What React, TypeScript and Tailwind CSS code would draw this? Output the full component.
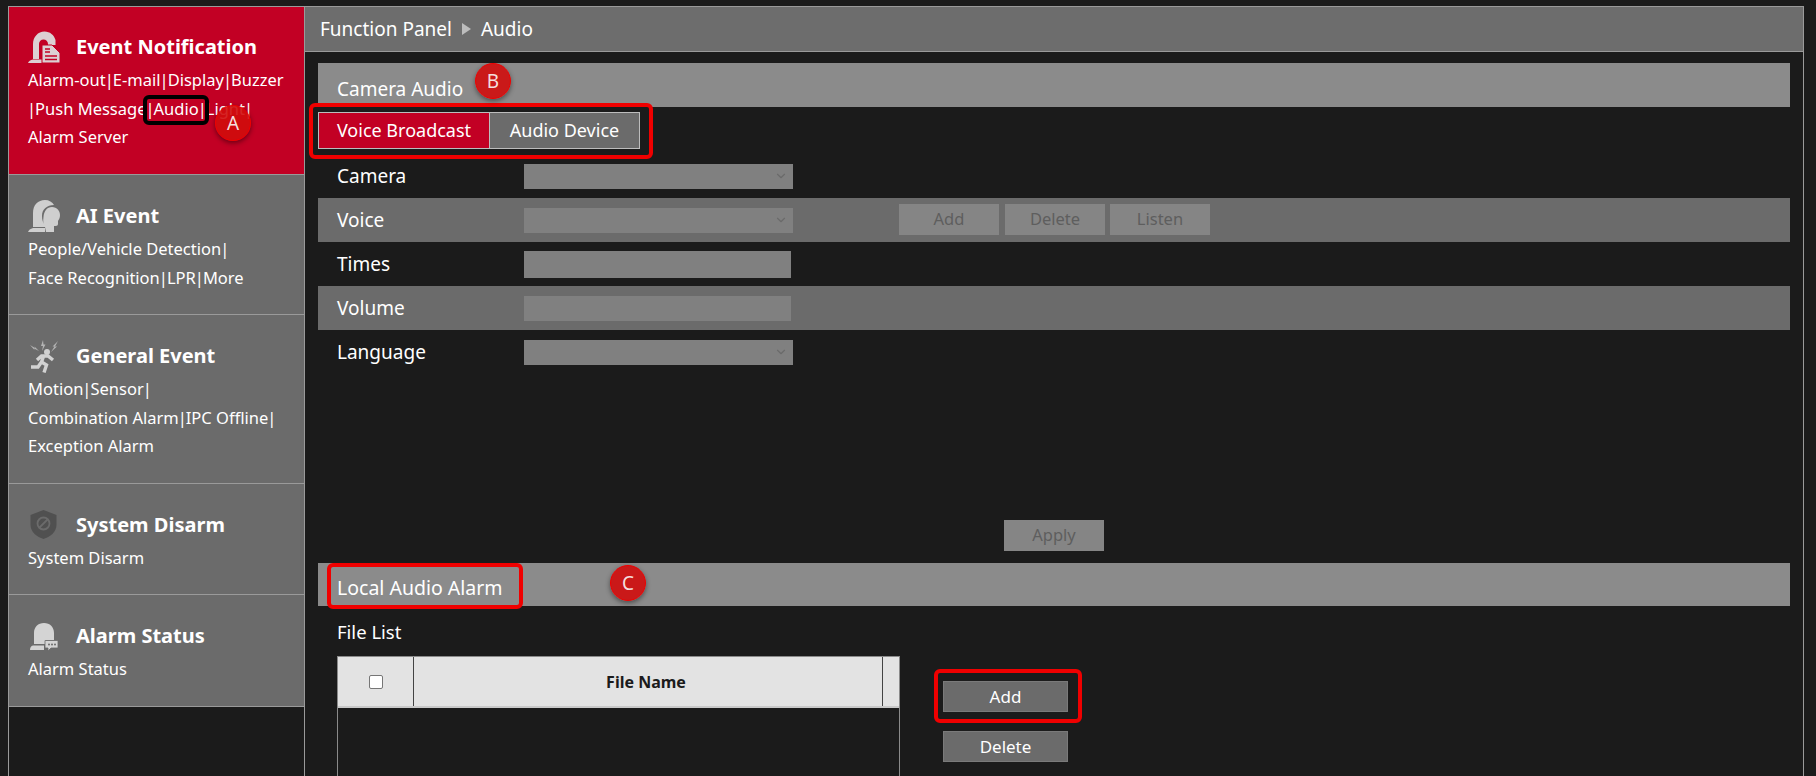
import { Fragment } from "react";
import { ChevronDown } from "lucide-react";

const font = "font-['Noto_Sans','Open_Sans',sans-serif]";

const DomeIcon = () => (
  <svg width="32" height="32" viewBox="0 0 32 32" className="shrink-0">
    <path d="M5 28V13C5 6 10 0.500 16.500 0.500C22 0.500 26 4 27.500 9V14H20V13A4.500 4.500 0 0 0 11 13V28Z" fill="#dcd0d3" />
    <path d="M5 28.500H15V32H0Q1 29 5 28.500Z" fill="#dcd0d3" />
    <path d="M14 14H24L32 22V32H14Z" fill="#dcd0d3" stroke="#c20024" strokeWidth="1" />
    <path d="M17 18H22M17 21H22M17 25H29M17 28.500H29" stroke="#c20024" strokeWidth="1.500" />
  </svg>
);

const FaceIcon = () => (
  <svg width="32" height="32" viewBox="0 0 32 32" className="shrink-0">
    <path d="M5 27V13C5 5 10 0 17 0C21 0 24.500 2 26 5C19 5 14 9 14 16C14 20 15 23 17 25V27Z" fill="#cfcfcf" />
    <path d="M5 28H17V32H0Q1 29 5 28Z" fill="#cfcfcf" />
    <path d="M24 7C29 7 32 11 32 15C32 18 31 19.500 30 21V24C30 26 28 26 26 26V32H18L17 27C15 24 15 21 15.500 17C16 11 19 7 24 7Z" fill="#cfcfcf" />
  </svg>
);

const RunIcon = () => (
  <svg width="32" height="33" viewBox="0 0 32 33" className="shrink-0">
    <circle cx="19" cy="12" r="3" fill="#d2d2d2" />
    <path d="M9 20L13.500 16H20L25 20M15.500 16.500L13.500 22L18.500 25L16 32.500M13.500 22L10 27H3" stroke="#d2d2d2" strokeWidth="3.400" fill="none" />
    <path d="M2 5L7 8L6.500 6.500L11 11L6 8.500L6.500 10Z" fill="#b4b4b4" />
    <path d="M15 0L13 6H15L14 11L17.500 4.500H15.500Z" fill="#b4b4b4" />
    <path d="M30 1L24.500 6.500H26.500L23 12L29 6.500H27Z" fill="#b4b4b4" />
  </svg>
);

const ShieldIcon = () => (
  <svg width="32" height="32" viewBox="0 0 32 32" className="shrink-0">
    <path d="M15.500 1L28.500 6V16C28.500 23 22 28 15.500 30C9 28 2.500 23 2.500 16V6Z" fill="#505050" />
    <circle cx="15.500" cy="14.500" r="6" fill="none" stroke="#6b6b6b" strokeWidth="1.800" />
    <path d="M11.500 18.500L19.500 10.500" stroke="#6b6b6b" strokeWidth="1.800" />
  </svg>
);

const StatusIcon = () => (
  <svg width="32" height="32" viewBox="0 0 32 32" className="shrink-0">
    <path d="M6 24V13C6 7 10 3 16 3C22 3 26 7 26 13V20H18V24Z" fill="#d4d4d4" />
    <path d="M5 25.500H16V30H2Q2 26 5 25.500Z" fill="#d4d4d4" />
    <path d="M17 20.500H30V28H23L20 31V28H17Z" fill="#d4d4d4" stroke="#6b6b6b" strokeWidth="0.800" />
    <circle cx="21" cy="24.500" r="1" fill="#6b6b6b" />
    <circle cx="24" cy="24.500" r="1" fill="#6b6b6b" />
    <circle cx="27" cy="24.500" r="1" fill="#6b6b6b" />
  </svg>
);

// the pipes sit tight against the words in the original
const PipedLine = ({ text }: { text: string }) => (
  <div>
    {text.split("|").map((part, i) => (
      <Fragment key={i}>
        {i > 0 && <span className="-mx-[1px]">|</span>}
        {part}
      </Fragment>
    ))}
  </div>
);

const MenuItem = ({
  title,
  icon,
  lines,
  active,
  height,
}: {
  title: string;
  icon: React.ReactNode;
  lines: string[];
  active?: boolean;
  height: string;
}) => (
  <div className={`${height} border-b border-[#9a9a9a] px-[19px] ${active ? "bg-[#c20024] pt-[24px]" : "bg-[#6b6b6b] pt-[25px]"}`}>
    <div className="flex h-[32px] items-center gap-[16px]">
      {icon}
      <span className="text-[20px] font-bold text-white">{title}</span>
    </div>
    <div className="mt-[3px] text-[16.500px] leading-[28.500px] whitespace-nowrap text-white">
      {lines.map((l) => (
        <PipedLine key={l} text={l} />
      ))}
    </div>
  </div>
);

const Field = ({ className }: { className: string }) => (
  <div className={`flex items-center justify-end pr-[5px] ${className}`}>
    <ChevronDown size={14} color="#6a6a6a" />
  </div>
);

const Row = ({
  label,
  shaded,
  children,
}: {
  label: string;
  shaded?: boolean;
  children: React.ReactNode;
}) => (
  <div className={`flex h-[44px] items-center pl-[19px] ${shaded ? "bg-[#6b6b6b]" : ""}`}>
    <div className="w-[187px] text-[19px] text-white">{label}</div>
    {children}
  </div>
);

const GhostButton = ({ text, className }: { text: string; className?: string }) => (
  <div className={`flex h-[31px] w-[100px] items-center justify-center bg-[#858585] text-[16.500px] text-[#5e5e5e] ${className ?? ""}`}>
    {text}
  </div>
);

const Badge = ({ text, className }: { text: string; className: string }) => (
  <div className={`absolute flex h-[36px] w-[36px] items-center justify-center rounded-full border border-[#ee0000] bg-[#d00c0c]/90 text-[19px] text-[#f4dede] shadow-[0_2px_5px_rgba(0,0,0,0.45)] ${className}`}>
    {text}
  </div>
);

export default function App() {
  return (
    <div className={`relative h-[776px] overflow-hidden bg-[#1b1b1b] pt-[6px] pl-[8px] ${font}`}>
      <div className="flex h-full">
        {/* left menu */}
        <div className="w-[297px] shrink-0 border-x border-t border-[#9a9a9a]">
          <MenuItem
            active
            height="h-[168px]"
            title="Event Notification"
            icon={<DomeIcon />}
            lines={["Alarm-out|E-mail|Display|Buzzer", "|Push Message|Audio|Light|", "Alarm Server"]}
          />
          <MenuItem
            height="h-[140px]"
            title="AI Event"
            icon={<FaceIcon />}
            lines={["People/Vehicle Detection|", "Face Recognition|LPR|More"]}
          />
          <MenuItem
            height="h-[169px]"
            title="General Event"
            icon={<RunIcon />}
            lines={["Motion|Sensor|", "Combination Alarm|IPC Offline|", "Exception Alarm"]}
          />
          <MenuItem height="h-[111px]" title="System Disarm" icon={<ShieldIcon />} lines={["System Disarm"]} />
          <MenuItem height="h-[112px]" title="Alarm Status" icon={<StatusIcon />} lines={["Alarm Status"]} />
        </div>

        {/* main panel */}
        <div className="w-[1499px] shrink-0 border-r border-[#9a9a9a]">
          <div className="flex h-[46px] items-center gap-[10px] border-y border-[#9a9a9a] bg-[#6d6d6d] pl-[15px] text-[19px] text-white">
            <span>Function Panel</span>
            <span className="h-0 w-0 border-y-[6px] border-l-[9px] border-y-transparent border-l-[#bdbdbd]" />
            <span>Audio</span>
          </div>

          <div className="mr-[13px] ml-[13px]">
            <div className="mt-[11px] flex h-[44px] items-center bg-[#8b8b8b] pt-[8px] pl-[19px] text-[19px] text-white">
              Camera Audio
            </div>

            <div className="mt-[5px] flex h-[37px] w-[322px] border border-[#bdbdbd] text-[18px] text-white">
              <div className="flex w-[170px] items-center justify-center bg-[#c20024]">Voice Broadcast</div>
              <div className="flex flex-1 items-center justify-center border-l border-[#bdbdbd] bg-[#6b6b6b]">Audio Device</div>
            </div>

            <div className="mt-[5px]">
              <Row label="Camera">
                <Field className="h-[25px] w-[269px] bg-[#808080]" />
              </Row>
              <Row label="Voice" shaded>
                <Field className="h-[25px] w-[269px] bg-[#808080]" />
                <GhostButton text="Add" className="mb-[1px] ml-[106px]" />
                <GhostButton text="Delete" className="mb-[1px] ml-[6px]" />
                <GhostButton text="Listen" className="mb-[1px] ml-[5px]" />
              </Row>
              <Row label="Times">
                <div className="h-[27px] w-[267px] bg-[#808080]" />
              </Row>
              <Row label="Volume" shaded>
                <div className="h-[25px] w-[267px] bg-[#808080]" />
              </Row>
              <Row label="Language">
                <Field className="h-[25px] w-[269px] bg-[#808080]" />
              </Row>
            </div>

            <GhostButton text="Apply" className="mt-[146px] ml-[686px]" />

            <div className="mt-[12px] flex h-[43px] items-center bg-[#8b8b8b] pt-[7px] pl-[19px] text-[19.500px] text-white">
              Local Audio Alarm
            </div>

            <div className="mt-[15px] pl-[19px] text-[18.500px] leading-[22px] text-white">File List</div>

            <div className="mt-[13px] ml-[19px] flex">
              <div className="h-[140px] w-[563px] shrink-0 border-x border-t border-[#8a8a8a]">
                <div className="flex h-[51px] border-b-2 border-[#c9c9c9] bg-[#e3e3e3] text-[16px] font-bold text-[#1b1b1b]">
                  <div className="flex w-[76px] items-center justify-center border-r border-[#444]">
                    <div className="h-[14px] w-[14px] rounded-[2px] border border-[#767676] bg-white" />
                  </div>
                  <div className="flex w-[469px] items-center justify-center border-r border-[#444] pr-[4px]">File Name</div>
                </div>
              </div>
              <div className="mt-[25px] ml-[43px] flex flex-col gap-[19px]">
                <div className="flex h-[31px] w-[125px] items-center justify-center border border-[#7a7a7a] bg-[#6b6b6b] text-[17px] text-white">Add</div>
                <div className="flex h-[31px] w-[125px] items-center justify-center border border-[#7a7a7a] bg-[#6b6b6b] text-[17px] text-white">Delete</div>
              </div>
            </div>
          </div>
        </div>
      </div>

      {/* annotations drawn over the screenshot */}
      <div className="absolute top-[95px] left-[143px] h-[30px] w-[66px] rounded-[6px] border-4 border-black" />
      <div className="absolute top-[103px] left-[309px] h-[56px] w-[344px] rounded-[6px] border-4 border-[#f00000]" />
      <div className="absolute top-[563px] left-[327px] h-[46px] w-[196px] rounded-[6px] border-4 border-[#f00000]" />
      <div className="absolute top-[669px] left-[934px] h-[54px] w-[148px] rounded-[6px] border-4 border-[#f00000]" />
      <Badge text="A" className="top-[105px] left-[215px]" />
      <Badge text="B" className="top-[63px] left-[475px]" />
      <Badge text="C" className="top-[565px] left-[610px]" />
    </div>
  );
}
